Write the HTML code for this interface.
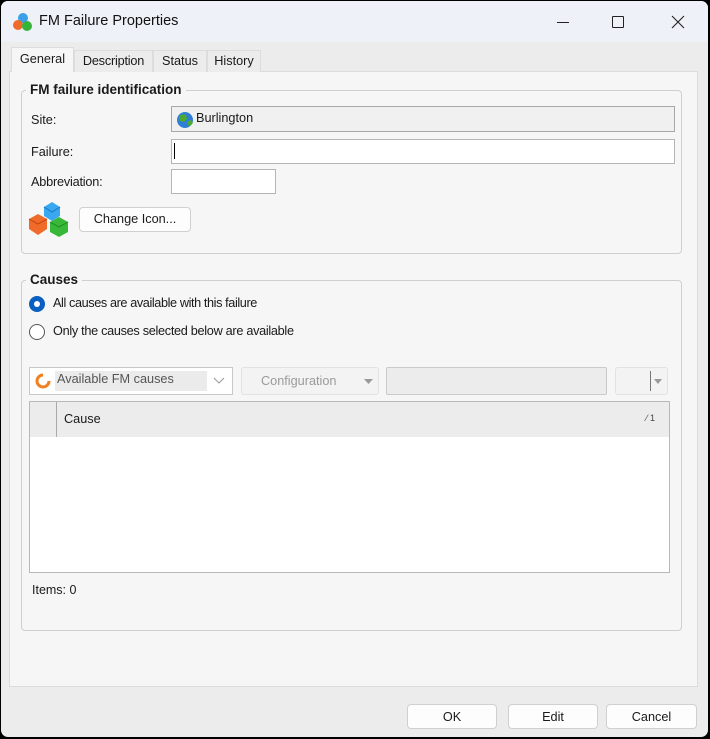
<!DOCTYPE html>
<html><head><meta charset="utf-8"><style>
*{box-sizing:border-box;margin:0;padding:0}
body{width:710px;height:739px;background:#000;font-family:"Liberation Sans",sans-serif;font-size:12.7px;color:#1a1a1a;position:relative;overflow:hidden}
.a{position:absolute}
#win{left:1px;top:1px;width:707px;height:736px;background:#ececec;border-radius:7px;overflow:hidden}
#title{left:0;top:0;width:707px;height:41px;background:#eef2f8}
.tab{top:49px;height:22px;background:#ececec;border:1px solid #dcdcdc;border-bottom:none;text-align:center;line-height:20px}
.grp{border:1px solid #cfcfcf;border-radius:4px}
.leg{background:#f6f6f6;font-weight:bold;font-size:13.5px;padding:0 4px;line-height:16px}
.box{border:1px solid #b5b5b5;background:#fff}
.btn{background:#fdfdfd;border:1px solid #d0d0d0;border-radius:4px;text-align:center}
</style></head><body>
<div id="win" class="a">
<div id="title" class="a">
<svg class="a" style="left:11px;top:11px" width="22" height="20" viewBox="0 0 22 20"><circle cx="11" cy="6" r="5" fill="#3aa0e8"/><circle cx="6" cy="13" r="5" fill="#f06a2a"/><circle cx="15" cy="14" r="5" fill="#36b43a"/></svg>
<div class="a" style="left:38px;top:12px;font-size:14.5px;color:#111">FM Failure Properties</div>
<div class="a" style="left:556px;top:21px;width:12px;height:1px;background:#222"></div>
<div class="a" style="left:611px;top:15px;width:12px;height:12px;border:1px solid #222;border-radius:1px"></div>
<svg class="a" style="left:670px;top:14px" width="14" height="14"><path d="M1 1L13 13M13 1L1 13" stroke="#222" stroke-width="1.1"/></svg>
</div>
<div class="a" style="left:8px;top:70px;width:689px;height:616px;background:#f6f6f6;border:1px solid #dcdcdc"></div>
<div class="a tab" style="left:73px;width:79px;letter-spacing:-0.2px">Description</div>
<div class="a tab" style="left:152px;width:54px">Status</div>
<div class="a tab" style="left:206px;width:54px">History</div>
<div class="a tab" style="left:10px;top:46px;width:63px;height:25px;background:#f6f6f6;line-height:22px">General</div>

<div class="a grp" style="left:20px;top:89px;width:661px;height:164px"></div>
<div class="a leg" style="left:25px;top:81px">FM failure identification</div>
<div class="a" style="left:30px;top:112px">Site:</div>
<div class="a box" style="left:170px;top:105px;width:504px;height:26px;background:#f0f0f0;border-color:#a8a8a8"></div>
<svg class="a" style="left:175px;top:110px" width="18" height="18"><circle cx="9" cy="9" r="8" fill="#2f7fd8"/><path d="M3 6q3-4 7-2l1 4-3 3-4-1zM11 11l4-2 2 3-4 4z" fill="#4caa2e"/></svg>
<div class="a" style="left:195px;top:110px">Burlington</div>
<div class="a" style="left:30px;top:144px">Failure:</div>
<div class="a box" style="left:170px;top:138px;width:504px;height:25px"></div>
<div class="a" style="left:173px;top:142px;width:1px;height:16px;background:#000"></div>
<div class="a" style="left:30px;top:174px;letter-spacing:-0.2px">Abbreviation:</div>
<div class="a box" style="left:170px;top:168px;width:105px;height:25px"></div>
<svg class="a" style="left:26px;top:199px" width="45" height="38" viewBox="0 0 45 38"><path d="M17 7l8-5 8 5v9l-8 5-8-5z" fill="#39a8f0"/><path d="M17 7l8 5 8-5" fill="none" stroke="#1c74c0"/><path d="M2 19l9-5 9 5v10l-9 6-9-6z" fill="#f06a2a"/><path d="M2 19l9 5 9-5" fill="none" stroke="#c04410"/><path d="M23 22l9-5 9 5v10l-9 5-9-5z" fill="#38b838"/><path d="M23 22l9 5 9-5" fill="none" stroke="#1e8a1e"/></svg>
<div class="a btn" style="left:78px;top:206px;width:112px;height:25px;line-height:23px">Change Icon...</div>

<div class="a grp" style="left:20px;top:279px;width:661px;height:351px"></div>
<div class="a leg" style="left:25px;top:271px">Causes</div>
<div class="a" style="left:28px;top:295px;width:16px;height:16px;border-radius:50%;background:#0a60c0"></div>
<div class="a" style="left:33px;top:300px;width:6px;height:6px;border-radius:50%;background:#fff"></div>
<div class="a" style="left:52px;top:295px;letter-spacing:-0.4px">All causes are available with this failure</div>
<div class="a" style="left:28px;top:323px;width:16px;height:16px;border-radius:50%;border:1px solid #555;background:#fff"></div>
<div class="a" style="left:52px;top:323px;letter-spacing:-0.3px">Only the causes selected below are available</div>

<div class="a box" style="left:28px;top:366px;width:204px;height:28px;border-color:#c8c8c8"></div>
<div class="a" style="left:54px;top:370px;width:152px;height:20px;background:#ebebeb"></div>
<svg class="a" style="left:33px;top:372px" width="18" height="16"><path d="M9 2a6 6 0 1 0 6 6" fill="none" stroke="#f08020" stroke-width="3"/></svg>
<div class="a" style="left:56px;top:371px;color:#555">Available FM causes</div>
<svg class="a" style="left:212px;top:376px" width="12" height="8"><path d="M1 1l5 5 5-5" fill="none" stroke="#999"/></svg>
<div class="a" style="left:240px;top:366px;width:138px;height:28px;background:#f3f3f3;border:1px solid #e2e2e2;border-radius:3px"></div>
<div class="a" style="left:260px;top:373px;color:#9a9a9a">Configuration</div>
<svg class="a" style="left:363px;top:378px" width="10" height="6"><path d="M0 0h9l-4.5 5z" fill="#999"/></svg>
<div class="a" style="left:385px;top:366px;width:221px;height:28px;background:#ececec;border:1px solid #cacaca;border-radius:2px"></div>
<div class="a" style="left:614px;top:366px;width:53px;height:28px;background:#f3f3f3;border:1px solid #e2e2e2;border-radius:3px"></div>
<div class="a" style="left:649px;top:370px;width:1px;height:20px;background:#777"></div>
<svg class="a" style="left:653px;top:378px" width="10" height="6"><path d="M0 0h8l-4 5z" fill="#999"/></svg>

<div class="a" style="left:28px;top:400px;width:641px;height:172px;background:#fff;border:1px solid #b8b8b8"></div>
<div class="a" style="left:29px;top:401px;width:639px;height:35px;background:#ececec"></div>
<div class="a" style="left:55px;top:401px;width:1px;height:35px;background:#aaa"></div>
<div class="a" style="left:63px;top:411px">Cause</div>
<div class="a" style="left:645px;top:412px;font-size:9px;color:#444">⁄ 1</div>
<div class="a" style="left:31px;top:582px;font-size:12.5px">Items: 0</div>

<div class="a btn" style="left:406px;top:703px;width:90px;height:25px;line-height:24px">OK</div>
<div class="a btn" style="left:507px;top:703px;width:90px;height:25px;line-height:24px">Edit</div>
<div class="a btn" style="left:605px;top:703px;width:91px;height:25px;line-height:24px">Cancel</div>
</div>
</body></html>
